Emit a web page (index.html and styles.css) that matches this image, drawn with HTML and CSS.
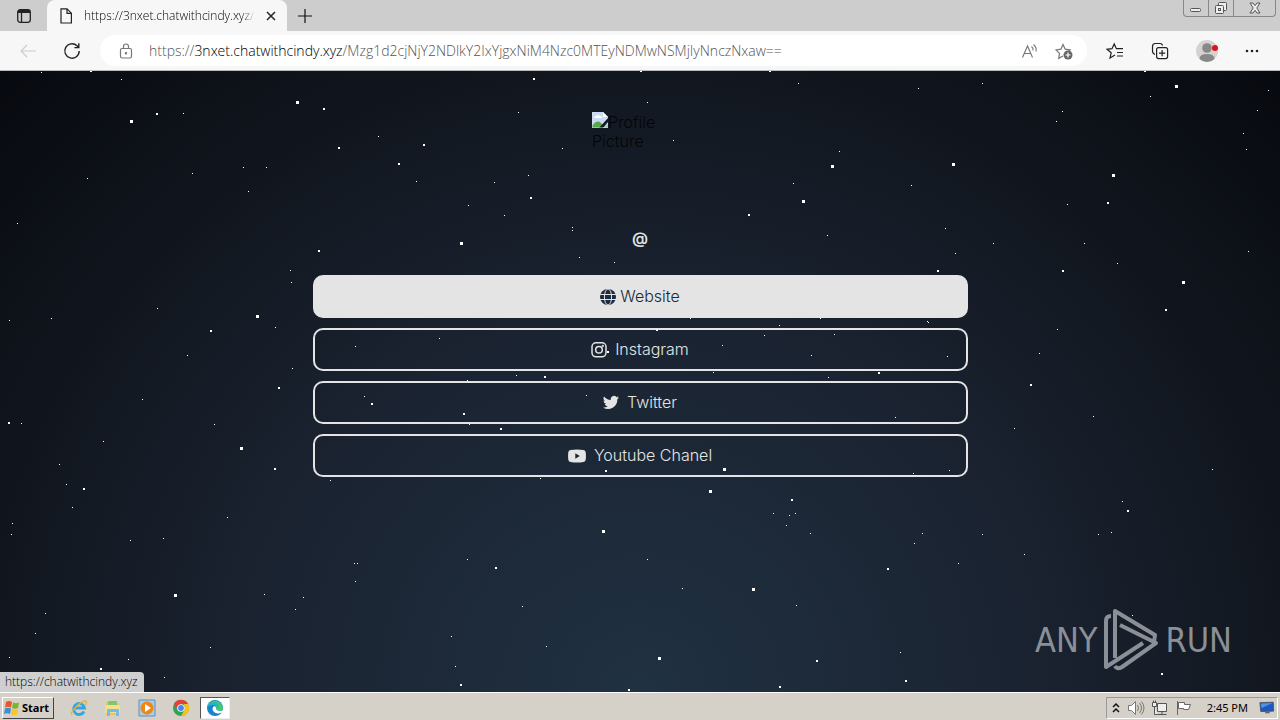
FILE: index.html
```html
<!DOCTYPE html>
<html lang="en">
  <head>
    <meta charset="UTF-8" />
    <meta name="viewport" content="width=device-width, initial-scale=1.0" />
    <title>chatwithcindy.xyz</title>
    <link rel="stylesheet" href="styles.css">
  </head>
  <body>
    <div class="desktop">
      <div class="stars stars-small"></div>
      <div class="stars stars-medium"></div>
      <div class="stars stars-large"></div>

      <header class="chrome">
        <div class="tab-bar">
          <button class="icon-btn tab-actions" aria-label="Tab actions">
            <svg width="16" height="16" viewBox="0 0 16 16" fill="none" stroke="#222" stroke-width="1.3"><rect x="1.7" y="1.7" width="12.6" height="12.6" rx="2.5"/><path d="M2 3.5h12" stroke-width="3"/><path d="M5.5 5v9"/></svg>
          </button>
          <div class="tab">
            <svg width="14" height="16" viewBox="0 0 14 16" fill="none" stroke="#222" stroke-width="1.2"><path d="M2 .8h6l4.4 4.4V15H2zM8 .8v4.6h4.4"/></svg>
            <span class="tab-title">https://3nxet.chatwithcindy.xyz/M</span>
            <button class="icon-btn" aria-label="Close tab">
              <svg width="10" height="10" viewBox="0 0 10 10" stroke="#222" stroke-width="1.5"><path d="M1 1l8 8M9 1L1 9"/></svg>
            </button>
          </div>
          <button class="icon-btn new-tab" aria-label="New tab">
            <svg width="16" height="16" viewBox="0 0 16 16" stroke="#111" stroke-width="1.2"><path d="M8 1v14M1 8h14"/></svg>
          </button>
          <div class="window-controls">
            <button aria-label="Minimize">
              <svg width="14" height="12" viewBox="0 0 14 12" fill="#eee" stroke="#555"><rect x="1.5" y="6.5" width="10" height="3" rx="1"/></svg>
            </button>
            <button aria-label="Restore">
              <svg width="14" height="14" viewBox="0 0 14 14" fill="#eee" stroke="#555"><rect x="4.5" y="1.5" width="8" height="8" rx="1"/><rect x="1.5" y="4.5" width="8" height="8" rx="1"/><rect x="4.5" y="7.5" width="2" height="2"/></svg>
            </button>
            <button class="close" aria-label="Close">
              <svg width="12" height="12" viewBox="0 0 12 12" fill="#eee" stroke="#555"><path d="M1 1h3l2 2.700 2-2.700h3L7.800 6 11 11H8L6 8.300 4 11H1l3.200-5z"/></svg>
            </button>
          </div>
        </div>

        <div class="toolbar">
          <button class="icon-btn" aria-label="Back">
            <svg width="16" height="16" viewBox="0 0 16 16" fill="none" stroke="#ccc" stroke-width="1.2"><path d="M16 8H1M7 2L1 8l6 6"/></svg>
          </button>
          <button class="icon-btn" aria-label="Refresh">
            <svg width="18" height="18" viewBox="0 0 18 18" fill="none" stroke="#222" stroke-width="1.4"><path d="M16.200 9A7.200 7.200 0 1 1 14 3.800L15.700 5.400M15.800 1.200v4.400h-4.400"/></svg>
          </button>
          <div class="address">
            <svg width="14" height="16" viewBox="0 0 14 16" fill="none" stroke="#777" stroke-width="1.2"><rect x="1.500" y="5.500" width="11" height="9.500" rx="1.500"/><path d="M4.500 5.500V3.500a2.500 2.500 0 0 1 5 0v2"/><circle cx="7" cy="10.200" r=".6" fill="#777"/></svg>
            <span class="url">https://<b>3nxet.chatwithcindy.xyz</b>/Mzg1d2cjNjY2NDlkY2IxYjgxNiM4Nzc0MTEyNDMwNSMjIyNnczNxaw==</span>
            <button class="icon-btn" aria-label="Read aloud">
              <svg width="18" height="16" viewBox="0 0 18 16" fill="none" stroke="#777" stroke-width="1.1"><path d="M1.500 14.500L6.500 3l5 11.500M3.200 10.500h6.600M10.500 3.500q2 1.500 1.500 4M12.500 1.500q3.500 3 2.500 7"/></svg>
            </button>
            <button class="icon-btn" aria-label="Add to favorites">
              <svg width="18" height="18" viewBox="0 0 18 18" fill="none" stroke="#777" stroke-width="1.200"><path d="M8 14l-4.300 2.300.8-4.900L1 7.900l4.900-.7L8 2.500l2.200 4.700 5 .7-1.500 1.500"/><circle cx="13" cy="13" r="4.500" fill="#666" stroke="none"/><path d="M13 10.500v5M10.500 13h5" stroke="#fff"/></svg>
            </button>
          </div>
          <button class="icon-btn" aria-label="Favorites">
            <svg width="18" height="18" viewBox="0 0 18 18" fill="none" stroke="#222" stroke-width="1.200"><path d="M9 13l-5 3 1.200-5.200L1 7.300l5-.6L8.200 2l2.200 4.700H17M11 10.500h6M11 14h6"/></svg>
          </button>
          <button class="icon-btn" aria-label="Collections">
            <svg width="18" height="18" viewBox="0 0 18 18" fill="none" stroke="#222" stroke-width="1.200"><path d="M4 12.500Q1.500 11.500 1.500 9V4.500q0-3 3-3H9q2 0 2.700 2"/><rect x="5.600" y="5.600" width="11" height="11" rx="2"/><path d="M11.100 8v6.200M8 11.100h6.200"/></svg>
          </button>
          <button class="icon-btn avatar" aria-label="Profile">
            <svg width="22" height="22" viewBox="0 0 22 22"><circle cx="11" cy="11" r="11" fill="#d5d2cf"/><circle cx="11" cy="8" r="4.800" fill="#888"/><path d="M3.500 19q0-5 7.500-5t7.500 5a11 11 0 0 1-15 0z" fill="#888"/><circle cx="19" cy="8" r="3" fill="#e01020"/></svg>
          </button>
          <button class="icon-btn" aria-label="Settings and more">
            <svg width="14" height="4" viewBox="0 0 14 4" fill="#222"><circle cx="2" cy="2" r="1.300"/><circle cx="7" cy="2" r="1.300"/><circle cx="12" cy="2" r="1.300"/></svg>
          </button>
        </div>
      </header>

      <main class="page">
        <div class="profile-picture" role="img" aria-label="Profile Picture">
          <svg width="16" height="16" viewBox="0 0 16 16"><path d="M0 0h11l5 5v11H0z" fill="#cbdcf2"/><path d="M11 0v5h5z" fill="#fff"/><path d="M2 6q0-2 2-2 2-2 4 0 2 0 2 2z" fill="#fff"/><path d="M0 16v-2q5-7 9-3l2 2v3z" fill="#58a84c"/><path d="M7 16l9-10v4l-5 6z" fill="#131a22"/><path d="M12 16l4-4v4z" fill="#a8c8a0"/><path d="M0 0v16h16" fill="none" stroke="#d8dde2"/></svg>Profile Picture
        </div>
        <h1 class="username">@</h1>
        <nav class="links">
          <a class="link is-active" href="https://chatwithcindy.xyz">
            <svg width="16" height="16" viewBox="0 0 16 16"><circle cx="8" cy="8" r="8" fill="#1b2c40"/><g fill="none" stroke="#e4e4e4"><ellipse cx="8" cy="8" rx="3.600" ry="8"/><path d="M0 5.500h16M0 10.500h16"/></g></svg>
            Website
          </a>
          <a class="link" href="#instagram">
            <svg width="16" height="16" viewBox="0 0 16 16" fill="none" stroke="#e4e4e4" stroke-width="1.500"><rect x="1" y=".8" width="14" height="14" rx="4"/><circle cx="8" cy="7.800" r="3.300"/><circle cx="11.800" cy="4" r=".4"/></svg>
            <span>Instagram</span>
          </a>
          <a class="link" href="#twitter">
            <svg width="16" height="15" viewBox="0 0 24 22" fill="#e4e4e4"><path d="M23.900 3.500a10 10 0 0 1-2.800.8 5 5 0 0 0 2.100-2.700 10 10 0 0 1-3.100 1.200 4.900 4.900 0 0 0-8.400 4.500A14 14 0 0 1 1.600 2.100a4.900 4.900 0 0 0 1.500 6.600 5 5 0 0 1-2.200-.6 4.900 4.900 0 0 0 3.900 4.900 5 5 0 0 1-2.200.1 4.900 4.900 0 0 0 4.600 3.400A10 10 0 0 1 0 18.500a14 14 0 0 0 21.500-12.400 10 10 0 0 0 2.400-2.600z"/></svg>
            <span>Twitter</span>
          </a>
          <a class="link" href="#youtube">
            <svg width="18" height="14" viewBox="0 0 18 14"><path d="M2.500 1Q9 0 15.500 1q2 .3 2.200 2.300.5 3.700 0 7.400-.2 2-2.200 2.300-6.500 1-13 0-2-.3-2.200-2.300-.5-3.700 0-7.400Q.500 1.300 2.500 1z" fill="#e4e4e4"/><path d="M7.300 4.300v5.400L11.800 7z" fill="#1a2533"/></svg>
            <span>Youtube Chanel</span>
          </a>
        </nav>

        <div class="status">https://chatwithcindy.xyz</div>
        <div class="watermark">
          <span>ANY</span>
          <svg width="56" height="64" viewBox="0 0 56 64" fill="none" stroke="currentColor" stroke-width="4" stroke-linejoin="round"><path d="M8 8Q3 8 3 13v46L40 35"/><path d="M12 50V3l40 24-1 7"/><path d="M17 17l36 18L19 59q-5 3-7-1"/></svg>
          <span>RUN</span>
        </div>
      </main>

      <footer class="taskbar">
        <button class="start">
          <svg width="16" height="16" viewBox="0 0 16 16"><path d="M2 2q3-2 6 0L7 7.500q-3-1.500-6 0z" fill="#e8562a"/><path d="M9 2.500q3 1.500 6 0l-1 5.500q-3 1.500-6 0z" fill="#7ab52c"/><path d="M1 8.500q3-1.500 6 0L6 14q-3-1.500-6 0z" fill="#3b8ed8"/><path d="M8 9q3 1.500 6 0l-1 5.500q-3 1.500-6 0z" fill="#f8c52c"/></svg>
          Start
        </button>
        <button class="task" aria-label="Internet Explorer">
          <svg width="18" height="18" viewBox="0 0 18 18" fill="none"><path d="M14 12.500A5.500 5.500 0 1 1 14.500 9H4" stroke="#38a4de" stroke-width="2.800"/><path d="M2 16q-2-2 3.500-7.500Q12 2 15.500 2q2 .5 0 4" stroke="#e4b63c" stroke-width="1.300"/></svg>
        </button>
        <button class="task" aria-label="Explorer">
          <svg width="18" height="18" viewBox="0 0 18 18"><path d="M2 3h5l1 1h7v12H2z" fill="#e5c564"/><path d="M4 2h9v5H4z" fill="#7fc66c"/><path d="M1.500 6h14.500v8H1.500z" fill="#f5df91"/><path d="M3 17v-6q0-1 1-1h10q1 0 1 1v6h-3v-4H6v4z" fill="#78bce0"/></svg>
        </button>
        <button class="task" aria-label="Media Player">
          <svg width="18" height="18" viewBox="0 0 18 18"><path d="M1 1h16v16H1z" fill="#a9cce8" stroke="#5b93bd"/><circle cx="9" cy="9" r="6.500" fill="#f08518"/><path d="M7 5l6 4-6 4z" fill="#fff"/></svg>
        </button>
        <button class="task" aria-label="Chrome">
          <svg width="18" height="18" viewBox="0 0 18 18"><circle cx="9" cy="9" r="8" fill="#34a350"/><path d="M2 5a8 8 0 0 1 14 0H9L6 11z" fill="#e34133"/><path d="M16 5a8 8 0 0 1-7 12l4-7-1-5z" fill="#fbc116"/><circle cx="9" cy="9" r="3.800" fill="#fff"/><circle cx="9" cy="9" r="2.900" fill="#4285f4"/></svg>
        </button>
        <button class="task is-open" aria-label="Edge">
          <svg width="18" height="18" viewBox="0 0 18 18"><circle cx="9" cy="9" r="8" fill="#1683d0"/><path d="M1.200 8A8 8 0 0 1 17 9q0 3-4 3-2.500 0-3-1.500 1.500-3.500-1.500-4.500Q4 5 1.200 8z" fill="#42c96e"/><path d="M1.200 8Q3 2.500 9.500 3.500 14 5 12 9q-1-3-4-3Q3.500 5.500 1.200 8z" fill="#25b3d2"/><path d="M8 7q-3 3 0 6 3 2.500 7.500.500l1 1 1.500-4q-4 3-8 0Q11 7.500 8 7z" fill="#fff"/></svg>
        </button>
        <div class="tray">
          <svg width="10" height="14" viewBox="0 0 10 14" fill="none" stroke="#111" stroke-width="1.500"><path d="M2 6l3-3 3 3M2 11l3-3 3 3"/></svg>
          <svg width="18" height="16" viewBox="0 0 18 16" fill="#fff" stroke="#777"><path d="M1.500 5.500h3l4-4v13l-4-4h-3z"/><path d="M10.500 5q2 3 0 6M12.500 3q4 5 0 10M14.500 1.500q5 6.500 0 13" fill="none"/></svg>
          <svg width="18" height="16" viewBox="0 0 18 16" fill="#eee" stroke="#555"><path d="M6.500 3.500h9v8h-9zM5.500 14.500h10M11 11.500v3"/><path d="M1.500 2.500h4v4h-4zM2.500 .5v2M4.500 .5v2M3.500 6.500v8h3"/></svg>
          <svg width="18" height="16" viewBox="0 0 18 16" fill="#fff" stroke="#666"><path d="M2.500 1v14M3.500 2.500h6v2h6l-2 5H8.500v-1h-5z"/></svg>
          <time class="clock">2:45 PM</time>
          <svg width="16" height="14" viewBox="0 0 18 14"><path d="M1 1l15-.5.500 10L2 11z" fill="#1e58c0" stroke="#456"/><path d="M2 2l13-.5L3 7z" fill="#5492e8"/><path d="M7 11h5v2H7z" fill="#666"/></svg>
        </div>
      </footer>
    </div>
  </body>
</html>
```
FILE: styles.css
```css
:root {
  --ui-font: "Noto Sans", "Open Sans", sans-serif;
  --light: #e4e4e4;
  --taskbar: #d5d0c8;
}

* {
  box-sizing: border-box;
}

body {
  margin: 0;
  font-family: var(--ui-font);
}

button {
  font: inherit;
  padding: 0;
  cursor: pointer;
}

svg {
  flex: none;
}

.desktop {
  position: relative;
  display: flex;
  flex-direction: column;
  min-height: 100vh;
  overflow: hidden;
}

/* Browser */
.chrome {
  position: relative;
  z-index: 2;
  background: #f7f7f7;
  border-bottom: 1px solid #bbb;
}

.icon-btn {
  display: flex;
  align-items: center;
  justify-content: center;
  background: none;
  border: 0;
}

.tab-bar {
  display: flex;
  align-items: center;
  height: 31px;
  background: #cdcdcd;
}

.tab-actions {
  width: 47px;
}

.tab {
  display: flex;
  align-items: center;
  gap: 11px;
  width: 240px;
  height: 31px;
  padding: 0 11px 0 12px;
  background: #f7f7f7;
  border-radius: 8px 8px 0 0;
}

.tab-title {
  flex: 1;
  overflow: hidden;
  color: #000;
  font-family: "Open Sans", sans-serif;
  font-size: 12px;
  font-weight: 300;
  white-space: nowrap;
  mask-image: linear-gradient(to right, #000 92%, transparent);
}

.new-tab {
  width: 36px;
}

.window-controls {
  display: flex;
  align-self: flex-start;
  margin-left: auto;
  margin-right: 4px;
  border: 1px solid #888;
  border-top: 0;
  border-radius: 0 0 4px 4px;

  button {
    display: flex;
    align-items: center;
    justify-content: center;
    width: 25px;
    height: 16px;
    background: none;
    border: 0;
    border-right: 1px solid #888;
  }

  .close {
    width: 41px;
    border-right: 0;
  }
}

.toolbar {
  display: flex;
  align-items: center;
  gap: 27px;
  height: 39px;
  padding: 0 21px 0 20px;
}

.address {
  display: flex;
  flex: 1;
  align-items: center;
  gap: 16px;
  height: 31px;
  margin: 0 -8px;
  padding: 0 14px 0 19px;
  background: #fff;
  border-radius: 16px;
}

.url {
  flex: 1;
  overflow: hidden;
  color: #555;
  font-family: "Open Sans", sans-serif;
  font-size: 14px;
  font-weight: 300;
  white-space: nowrap;

  b {
    color: #000;
    font-weight: inherit;
  }
}

/* Page */
.page {
  position: relative;
  flex: 1;
  display: flex;
  flex-direction: column;
  align-items: center;
  padding: 41px 20px;
  background: radial-gradient(ellipse at bottom, #203142 0%, #1a2230 45%, #11161e 72%, #07090f 100%);
  font-family: Inter, sans-serif;
  font-size: 16px;
  font-weight: 300;
  line-height: 19px;
}

.profile-picture {
  width: 96px;
  height: 96px;
  color: #030507;
}

.username {
  margin: 21px 0 27px;
  color: var(--light);
  font-size: 16px;
  font-weight: 600;
  line-height: 19px;
}

.links {
  display: flex;
  flex-direction: column;
  gap: 10px;
  width: 100%;
  max-width: 655px;
}

.link {
  display: flex;
  align-items: center;
  justify-content: center;
  gap: 8px;
  padding: 10px;
  border: 2px solid var(--light);
  border-radius: 10px;
  color: var(--light);
  text-decoration: none;

  &.is-active {
    gap: 4px;
    background: var(--light);
    color: #1b2735;
  }
}

.status {
  position: absolute;
  left: 0;
  bottom: 0;
  padding: 0 6px 0 5px;
  background: #cfcfcf;
  border-top-right-radius: 4px;
  color: #000;
  font-family: "Open Sans", sans-serif;
  font-size: 12px;
  line-height: 20px;
}

.watermark {
  position: absolute;
  right: 48px;
  bottom: 20px;
  display: flex;
  align-items: center;
  gap: 6px;
  color: #8b8f96;
  font-family: "Liberation Sans Narrow", "DejaVu Sans Condensed", sans-serif;
  font-size: 34px;
  font-weight: 400;
  line-height: 64px;
}

/* Stars */
.stars {
  position: absolute;
  top: 0;
  left: 0;
  z-index: 1;
  color: #fff;
}

.stars-small {
  width: 1px;
  height: 1px;
  box-shadow:
    41px 72px, 121px 79px, 183px 113px, 378px 136px, 243px 167px, 266px 167px,
    87px 178px, 192px 173px, 248px 191px, 416px 181px, 17px 223px, 290px 270px,
    291px 282px, 157px 308px, 9px 320px, 51px 318px, 275px 327px, 187px 355px,
    355px 346px, 292px 368px, 647px 102px, 518px 112px, 798px 83px, 562px 148px,
    673px 140px, 839px 151px, 528px 175px, 494px 182px, 793px 183px, 468px 205px,
    504px 215px, 572px 227px, 572px 230px, 827px 235px, 579px 257px, 614px 262px,
    690px 318px, 820px 318px, 779px 325px, 764px 335px, 834px 334px, 439px 338px,
    722px 345px, 811px 355px, 516px 375px, 713px 372px, 828px 377px, 918px 88px,
    982px 83px, 1062px 111px, 1056px 121px, 1150px 96px, 1268px 90px, 1257px 110px,
    1243px 133px, 1246px 149px, 911px 185px, 1067px 204px, 945px 228px, 955px 253px,
    993px 243px, 1084px 243px, 1117px 263px, 1248px 251px, 927px 321px, 928px 322px,
    1057px 329px, 1039px 353px, 947px 356px, 142px 399px, 21px 423px, 214px 424px,
    103px 441px, 59px 464px, 66px 484px, 72px 507px, 227px 517px, 12px 523px,
    11px 534px, 130px 540px, 163px 538px, 354px 563px, 357px 563px, 355px 581px,
    467px 559px, 647px 559px, 522px 606px, 682px 588px, 264px 594px, 303px 597px,
    295px 609px, 45px 613px, 35px 633px, 9px 657px, 128px 659px, 210px 647px,
    451px 636px, 455px 666px, 546px 646px, 330px 480px, 540px 478px, 469px 424px,
    467px 380px, 586px 395px, 364px 396px, 895px 417px, 1014px 428px, 1093px 416px,
    949px 470px, 913px 473px, 1212px 469px, 773px 513px, 789px 515px, 795px 513px,
    786px 525px, 810px 533px, 922px 533px, 914px 543px, 982px 534px, 1024px 554px,
    958px 563px, 1098px 534px, 1111px 532px, 1122px 501px, 796px 605px, 900px 652px,
    164px 677px, 1132px 615px;
}

.stars-medium {
  width: 2px;
  height: 2px;
  box-shadow:
    90px 70px, 156px 113px, 323px 108px, 338px 147px, 398px 163px, 423px 144px,
    318px 250px, 210px 330px, 533px 78px, 640px 70px, 769px 70px, 530px 197px,
    748px 214px, 544px 376px, 607px 351px, 656px 329px, 1107px 202px, 937px 270px,
    1062px 270px, 1165px 309px, 878px 372px, 1144px 70px, 278px 387px, 371px 403px,
    463px 413px, 500px 428px, 8px 422px, 274px 468px, 83px 488px, 605px 470px,
    791px 499px, 1030px 384px, 1127px 510px, 887px 568px, 495px 567px, 100px 668px,
    460px 684px, 628px 689px, 816px 660px, 779px 686px, 905px 680px, 1161px 673px;
}

.stars-large {
  width: 3px;
  height: 3px;
  box-shadow:
    130px 120px, 296px 101px, 256px 315px, 831px 165px, 802px 200px, 460px 242px,
    1175px 85px, 952px 163px, 1112px 174px, 1182px 281px, 240px 447px, 723px 468px,
    709px 490px, 602px 530px, 174px 594px, 752px 588px, 658px 657px;
}

/* Taskbar */
.taskbar {
  position: relative;
  z-index: 2;
  display: flex;
  align-items: center;
  gap: 4px;
  height: 28px;
  padding: 2px 2px 0;
  background: var(--taskbar);
  border-top: 1px solid #fff;
}

.start {
  display: flex;
  align-items: center;
  gap: 2px;
  height: 22px;
  margin-right: 6px;
  padding: 0 4px 0 1px;
  background: var(--taskbar);
  border: 1px solid;
  border-color: #fff #444 #444 #fff;
  color: #000;
  font-size: 11px;
  font-weight: bold;
}

.task {
  display: flex;
  align-items: center;
  justify-content: center;
  width: 30px;
  height: 22px;
  background: none;
  border: 0;

  &.is-open {
    background: #fff;
    border: 1px solid;
    border-color: #555 #eee #eee #555;
  }
}

.tray {
  display: flex;
  align-items: center;
  gap: 6px;
  height: 22px;
  margin-left: auto;
  padding: 0 2px 0 4px;
  border: 1px solid;
  border-color: #999 #fff #fff #999;
}

.clock {
  padding: 0 5px 0 8px;
  font-size: 11px;
}
```
